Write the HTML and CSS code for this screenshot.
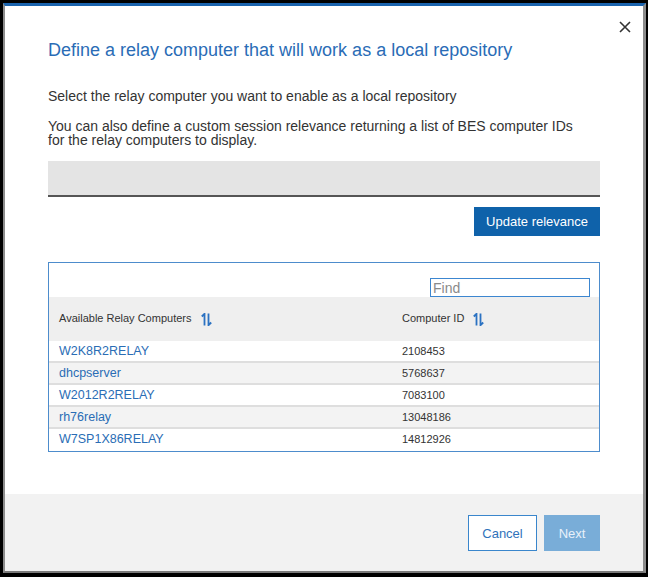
FILE: index.html
```html
<!DOCTYPE html>
<html lang="en">
<head>
  <meta charset="UTF-8" />
  <title>Define a relay computer</title>
  <link rel="stylesheet" href="styles.css">
</head>
<body>
  <div class="frame">
    <div class="dialog">
      <button class="close-btn" aria-label="Close">
        <svg width="12" height="12" viewBox="0 0 12 12"><path d="M1 1 L11 11 M11 1 L1 11" stroke="#333" stroke-width="1.6" fill="none"/></svg>
      </button>

      <div class="dialog-body">
        <h1 class="title">Define a relay computer that will work as a local repository</h1>
        <p class="lead">Select the relay computer you want to enable as a local repository</p>
        <p class="lead lead-tight">You can also define a custom session relevance returning a list of BES computer IDs for the relay computers to display.</p>

        <div class="relevance-field"></div>

        <div class="action-row">
          <button class="btn-primary">Update relevance</button>
        </div>

        <div class="table-box">
          <div class="find-row">
            <input class="find-input" type="text" placeholder="Find">
          </div>
          <table class="relay-table">
            <thead>
              <tr>
                <th class="col-name">Available Relay Computers <span class="sort-icon"><svg width="11" height="13" viewBox="0 0 11 13"><path d="M3.5 12.5 V0.8 L0.8 3.5" stroke="#2b72c2" stroke-width="1.8" fill="none"/><path d="M7.5 0.5 V12.2 L10.2 9.5" stroke="#2b72c2" stroke-width="1.8" fill="none"/></svg></span></th>
                <th class="col-id">Computer ID <span class="sort-icon"><svg width="11" height="13" viewBox="0 0 11 13"><path d="M3.5 12.5 V0.8 L0.8 3.5" stroke="#2b72c2" stroke-width="1.8" fill="none"/><path d="M7.5 0.5 V12.2 L10.2 9.5" stroke="#2b72c2" stroke-width="1.8" fill="none"/></svg></span></th>
              </tr>
            </thead>
            <tbody>
              <tr><td><a href="#">W2K8R2RELAY</a></td><td>2108453</td></tr>
              <tr class="alt"><td><a href="#">dhcpserver</a></td><td>5768637</td></tr>
              <tr><td><a href="#">W2012R2RELAY</a></td><td>7083100</td></tr>
              <tr class="alt"><td><a href="#">rh76relay</a></td><td>13048186</td></tr>
              <tr><td><a href="#">W7SP1X86RELAY</a></td><td>14812926</td></tr>
            </tbody>
          </table>
        </div>
      </div>

      <div class="dialog-footer">
        <button class="btn-secondary">Cancel</button>
        <button class="btn-disabled">Next</button>
      </div>
    </div>
  </div>
</body>
</html>
```

FILE: styles.css
```css
html, body {
  margin: 0;
  padding: 0;
  background: #000;
  font-family: "Liberation Sans", Arial, sans-serif;
  color: #333;
}
.frame {
  width: 648px;
  height: 577px;
  box-sizing: border-box;
  border-top: 3px solid #000;
  border-left: 3px solid #000;
  border-right: 2px solid #000;
  border-bottom: 4px solid #000;
}
.dialog {
  position: relative;
  height: 100%;
  box-sizing: border-box;
  background: #fff;
  border-top: 3px solid #1a63ad;
  border-left: 2px solid #8c8c8c;
  border-right: 3px solid #8c8c8c;
  border-bottom: 2px solid #7a7a7a;
  display: flex;
  flex-direction: column;
}
.close-btn {
  position: absolute;
  top: 14px;
  right: 11px;
  width: 14px;
  height: 14px;
  padding: 0;
  border: none;
  background: none;
  display: flex;
  align-items: center;
  justify-content: center;
}
.dialog-body {
  flex: 1;
  padding: 33px 43px 0 43px;
}
.title {
  margin: 0;
  font-size: 18px;
  line-height: 22px;
  font-weight: normal;
  color: #2a6cb6;
}
.lead {
  margin: 27px 0 0 0;
  font-size: 14px;
  line-height: 16px;
  color: #333;
}
.lead-tight {
  margin-top: 15px;
  max-width: 535px;
  line-height: 14px;
}
.relevance-field {
  margin-top: 14px;
  height: 34px;
  background: #e4e4e4;
  border-bottom: 2px solid #555;
}
.action-row {
  display: flex;
  justify-content: flex-end;
  margin-top: 10px;
}
.btn-primary {
  height: 29px;
  padding: 0 12px;
  border: none;
  background: #0f62aa;
  color: #fff;
  font-family: inherit;
  font-size: 13px;
}
.table-box {
  margin-top: 26px;
  border: 1px solid #4d8ccc;
  padding-bottom: 2px;
}
.find-row {
  display: flex;
  justify-content: flex-end;
  padding: 15px 9px 0 0;
}
.find-input {
  width: 160px;
  height: 19px;
  box-sizing: border-box;
  border: 1px solid #3c86d0;
  padding: 0 2px;
  font-family: inherit;
  font-size: 14px;
  outline: none;
}
.find-input::placeholder {
  color: #8a8a8a;
}
.relay-table {
  width: 100%;
  border-collapse: collapse;
  table-layout: fixed;
}
.relay-table th {
  height: 44px;
  padding: 0 0 0 10px;
  background: #efefef;
  font-size: 11px;
  font-weight: normal;
  text-align: left;
  color: #333;
}
.relay-table .col-name {
  width: 333px;
}
.sort-icon {
  display: inline-block;
  margin-left: 6px;
  vertical-align: middle;
}
.sort-icon svg {
  display: block;
}
.relay-table td {
  height: 20px;
  padding: 0 0 0 10px;
  font-size: 11px;
  color: #333;
}
.relay-table tbody tr + tr td {
  border-top: 2px solid #dedede;
}
.relay-table tr.alt td {
  background: #f3f3f3;
}
.relay-table a {
  color: #2a6db5;
  font-size: 12.5px;
  text-decoration: none;
}
.dialog-footer {
  height: 77px;
  box-sizing: border-box;
  background: #f2f2f2;
  padding: 21px 43px 0 0;
  display: flex;
  justify-content: flex-end;
  align-items: flex-start;
  gap: 7px;
}
.btn-secondary {
  width: 69px;
  height: 36px;
  border: 1.5px solid #3a86cc;
  background: #fff;
  color: #2f72ba;
  font-family: inherit;
  font-size: 13px;
}
.btn-disabled {
  width: 56px;
  height: 36px;
  border: none;
  background: #79add8;
  color: #e8f1fa;
  font-family: inherit;
  font-size: 13px;
}
```
